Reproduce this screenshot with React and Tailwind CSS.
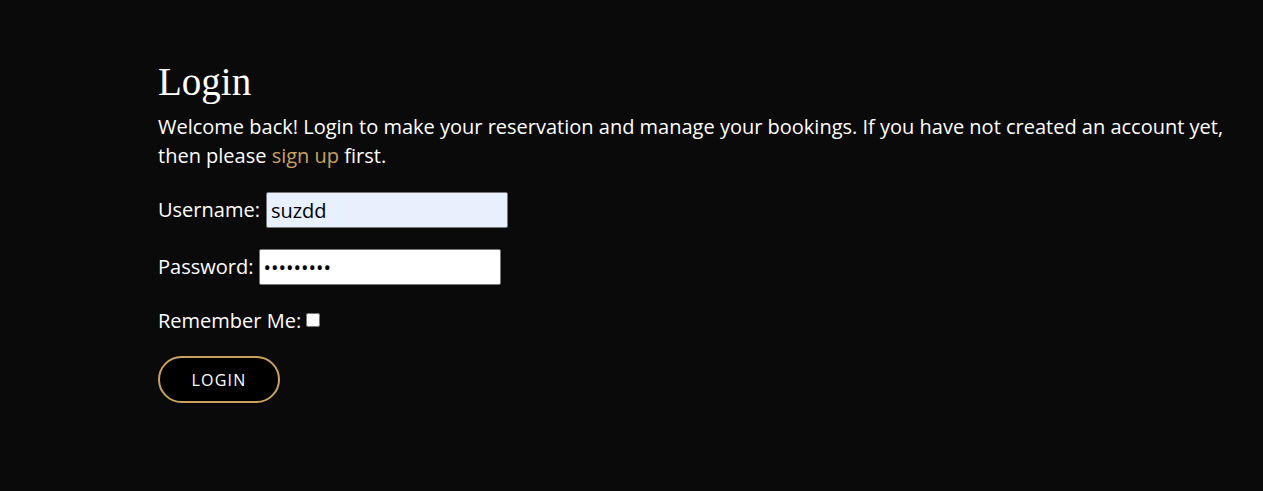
export default function App() {
  return (
    <div className="min-h-[491px] w-full bg-[#0b0a0a] text-white" style={{ fontFamily: '"Open Sans", sans-serif' }}>
      <div className="pl-[158px] pr-[30px] pt-[58px]">
        <h1 className="text-[39px] leading-[48px] text-white mb-[6px]" style={{ fontFamily: '"Liberation Serif", serif' }}>Login</h1>
        <p className="text-[20px] leading-[29px] max-w-[1080px]">
          Welcome back! Login to make your reservation and manage your bookings. If you have not created an account yet, then please <span className="text-[#c9a25f]">sign up</span> first.
        </p>
        <form className="mt-[22px]" onSubmit={(e) => e.preventDefault()}>
          <div className="flex items-center h-[36px] mb-[21px]">
            <label className="text-[20px] mr-[6px]">Username:</label>
            <input className="w-[242px] h-[36px] bg-[#e8f0fe] text-black text-[20px] px-[4px] border border-[#767676] rounded-[2px] outline-none" defaultValue="suzdd" />
          </div>
          <div className="flex items-center h-[36px] mb-[21px]">
            <label className="text-[20px] mr-[6px]">Password:</label>
            <input type="password" className="w-[242px] h-[36px] bg-white text-black text-[20px] px-[3px] border border-[#767676] rounded-[2px] outline-none" defaultValue="123456789" />
          </div>
          <div className="flex items-center h-[29px] mb-[21px]">
            <label className="text-[20px] leading-[29px] mr-[5px]">Remember Me:</label>
            <input type="checkbox" className="w-[14px] h-[14px] mt-[-2px]" />
          </div>
          <button className="w-[122px] h-[47px] rounded-full border-2 border-[#c9a25f] bg-black text-white text-[16px] tracking-[1.2px]">LOGIN</button>
        </form>
      </div>
    </div>
  );
}
